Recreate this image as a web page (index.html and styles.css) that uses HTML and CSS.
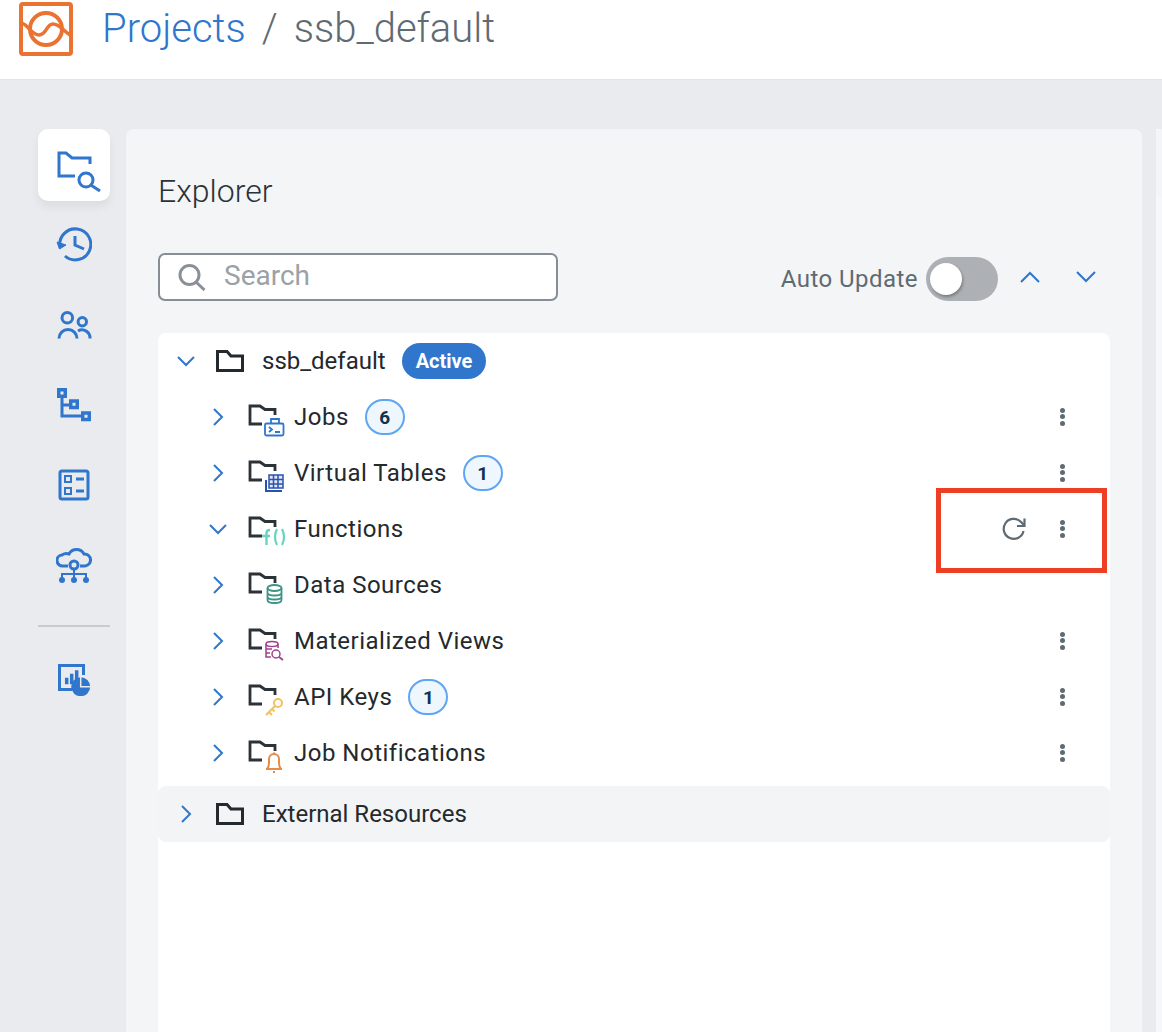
FILE: index.html
```html
<!DOCTYPE html>
<html lang="en">

<head>
    <meta charset="UTF-8">
    <title>ssb_default</title>
    <link rel="stylesheet" href="styles.css">
</head>

<body>
    <header class="topBar">
        <svg class="logo" width="54" height="54" viewBox="0 0 54 54" fill="none" stroke="#ea7331">
            <rect x="2" y="2" width="50" height="50" rx="2" stroke-width="4"/>
            <circle cx="27" cy="27" r="16" stroke-width="4"/>
            <path d="M3 21 C10 24 13 33 20 33 C28 33 27 22 34 22 C41 22 44 29 51 33" stroke-width="3.500"/>
        </svg>
        <nav class="crumbs">
            <a class="crumbLink">Projects</a>
            <span class="crumbSep">/</span>
            <span class="crumbCurrent">ssb_default</span>
        </nav>
    </header>

    <div class="workspace">
        <aside class="sideNav">
            <div class="sideItem selected">
                <svg width="56" height="56" viewBox="0 0 56 56" fill="none" stroke="#2f76cc" stroke-width="3">
                    <path d="M29 39 H13 V16 H20 L26 21 H44 V27"/>
                    <circle cx="40" cy="43" r="7"/>
                    <path d="M45.500 48.500 L54 54"/>
                </svg>
            </div>
            <div class="sideItem">
                <svg width="36" height="36" viewBox="0 0 36 36" fill="none" stroke="#2f76cc" stroke-width="3">
                    <path d="M4 20 A15.500 15.500 0 1 1 9 29"/>
                    <path d="M1 15 L3.500 22 L10 18 Z" fill="#2f76cc" stroke-width="1"/>
                    <path d="M19 9 V18 L28 22"/>
                </svg>
            </div>
            <div class="sideItem">
                <svg width="36" height="32" viewBox="0 0 36 32" fill="none" stroke="#2f76cc" stroke-width="3">
                    <circle cx="11.300" cy="8.700" r="5.300"/>
                    <circle cx="26.300" cy="12.700" r="4.200"/>
                    <path d="M3 29.500 A9 9 0 0 1 21 29.500"/>
                    <path d="M22 22 A8 8 0 0 1 34 29.500"/>
                </svg>
            </div>
            <div class="sideItem">
                <svg width="34" height="34" viewBox="0 0 34 34" fill="none" stroke="#2f76cc" stroke-width="3">
                    <rect x="1.750" y="1.750" width="6.500" height="6.500" stroke-width="3.500"/>
                    <rect x="13.750" y="13" width="6.500" height="6.500" stroke-width="3.500"/>
                    <rect x="25.750" y="25" width="6.500" height="6.500" stroke-width="3.500"/>
                    <path d="M5 10 V28 H24 M5 17 H12"/>
                </svg>
            </div>
            <div class="sideItem">
                <svg width="32" height="32" viewBox="0 0 32 32" fill="none" stroke="#2f76cc" stroke-width="3">
                    <rect x="2" y="2" width="28" height="28" rx="2"/>
                    <rect x="7" y="7" width="6" height="6" stroke-width="2"/>
                    <rect x="7" y="19" width="6" height="6" stroke-width="2"/>
                    <path d="M18 10 H26 M18 22 H26"/>
                </svg>
            </div>
            <div class="sideItem">
                <svg width="36" height="40" viewBox="0 0 36 40" fill="none" stroke="#2f76cc" stroke-width="3">
                    <path d="M12 21 H7 A5.500 5.500 0 0 1 6 10 A8 8 0 0 1 13 9 A8.500 8.500 0 0 1 28 9 A6 6 0 0 1 29 21 H24"/>
                    <circle cx="18" cy="20" r="4"/>
                    <path d="M18 24 V34 M6 34 V29 H30 V34" stroke-width="2"/>
                    <circle cx="6" cy="35" r="3" fill="#2f76cc" stroke="none"/>
                    <circle cx="18" cy="35" r="3" fill="#2f76cc" stroke="none"/>
                    <circle cx="30" cy="35" r="3" fill="#2f76cc" stroke="none"/>
                </svg>
            </div>
            <div class="sideDivider"></div>
            <div class="sideItem">
                <svg width="36" height="36" viewBox="0 0 36 36" fill="none" stroke="#2f76cc" stroke-width="3">
                    <path d="M16 29.500 H3.500 V5.500 H27.500 V15"/>
                    <path d="M10.700 24.300 V17.700 M15.700 24.300 V13.700 M20.700 22 V10.300" stroke-width="3.500"/>
                    <circle cx="24.700" cy="26.700" r="9.500" fill="#2f76cc" stroke="none"/>
                    <path d="M24.700 17 V26.700 H34.500" stroke="#e9ebee" stroke-width="1.500"/>
                </svg>
            </div>
        </aside>

        <main class="explorerPanel">
            <h1 class="panelTitle">Explorer</h1>

            <div class="toolRow">
                <label class="searchBox">
                    <svg width="28" height="28" viewBox="0 0 28 28" fill="none" stroke="#8a9097" stroke-width="3">
                        <circle cx="11.500" cy="12" r="9.500"/>
                        <path d="M18 19 L26.500 27"/>
                    </svg>
                    <span class="searchHint">Search</span>
                </label>
                <div class="toolRight">
                    <span class="autoLabel">Auto Update</span>
                    <span class="toggle"><span class="toggleKnob"></span></span>
                    <svg class="moveBtn" width="20" height="12" viewBox="0 0 20 12" fill="none" stroke="#2f76cc" stroke-width="2"><path d="M1 11 L10 2 L19 11"/></svg>
                    <svg class="moveBtn" width="20" height="12" viewBox="0 0 20 12" fill="none" stroke="#2f76cc" stroke-width="2"><path d="M1 1 L10 10 L19 1"/></svg>
                </div>
            </div>

            <section class="tree">
                <div class="rootRow">
                    <svg class="chev" width="18" height="18" viewBox="0 0 18 18" fill="none" stroke="#2f76cc" stroke-width="2"><path d="M1 5 L9 13 L17 5"/></svg>
                    <svg class="rootFolder" width="28" height="22" viewBox="0 0 28 22" fill="none" stroke="#24292d" stroke-width="3"><path d="M1.500 20.500 V1.500 H11 L15 6 H26.500 V20.500 Z"/></svg>
                    <span class="rootName">ssb_default</span>
                    <span class="activeBadge">Active</span>
                </div>

                <div class="treeRow">
                    <svg class="chev" width="18" height="18" viewBox="0 0 18 18" fill="none" stroke="#2f76cc" stroke-width="2"><path d="M5 1 L13 9 L5 17"/></svg>
                    <svg class="nodeIcon" width="38" height="36" viewBox="0 0 38 36" fill="none">
                        <path d="M14 21 H2 V3 H12 L17 6.500 H27 V12" stroke="#2b3238" stroke-width="2.800"/>
                        <g stroke="#2f76cc" stroke-width="1.800">
                            <rect x="17" y="20.500" width="18.500" height="12" rx="1.500" fill="#fff"/>
                            <path d="M23 20.500 V16 H31 V20.500 M21 24 L24 26.500 L21 29 M27 29 H32"/>
                        </g>
                    </svg>
                    <span class="nodeName">Jobs</span>
                    <span class="countBadge">6</span>
                    <span class="rowActions"><span class="kebab"><i></i><i></i><i></i></span></span>
                </div>

                <div class="treeRow">
                    <svg class="chev" width="18" height="18" viewBox="0 0 18 18" fill="none" stroke="#2f76cc" stroke-width="2"><path d="M5 1 L13 9 L5 17"/></svg>
                    <svg class="nodeIcon" width="38" height="36" viewBox="0 0 38 36" fill="none">
                        <path d="M14 21 H2 V3 H12 L17 6.500 H27 V12" stroke="#2b3238" stroke-width="2.800"/>
                        <g stroke="#2a52b0">
                            <path d="M18 21 V32 H34" stroke-width="2"/>
                            <rect x="21" y="16" width="14" height="13" fill="#dfe6f5" stroke-width="1.500"/>
                            <path d="M25.500 16 V29 M30 16 V29 M21 20.500 H35 M21 25 H35" stroke-width="1.500"/>
                        </g>
                    </svg>
                    <span class="nodeName">Virtual Tables</span>
                    <span class="countBadge">1</span>
                    <span class="rowActions"><span class="kebab"><i></i><i></i><i></i></span></span>
                </div>

                <div class="treeRow">
                    <svg class="chev" width="18" height="18" viewBox="0 0 18 18" fill="none" stroke="#2f76cc" stroke-width="2"><path d="M1 5 L9 13 L17 5"/></svg>
                    <svg class="nodeIcon" width="38" height="36" viewBox="0 0 38 36" fill="none">
                        <path d="M14 21 H2 V3 H12 L17 6.500 H27 V12" stroke="#2b3238" stroke-width="2.800"/>
                        <path d="M18.500 30 V18 Q18.500 15 22 15 M14 21 H22" stroke="#68d3bf" stroke-width="2.400"/>
                        <path d="M29 14 Q25 22 29 30 M34 14 Q38 22 34 30" stroke="#68d3bf" stroke-width="2.200"/>
                    </svg>
                    <span class="nodeName">Functions</span>
                    <span class="rowActions">
                        <svg width="24" height="24" viewBox="0 0 24 24" fill="none" stroke="#5f6a72" stroke-width="2.200"><path d="M21.500 14 A10 10 0 1 1 18.500 4.500 L22 8"/><path d="M22.500 1.500 V9 H15"/></svg>
                        <span class="kebab"><i></i><i></i><i></i></span>
                    </span>
                </div>

                <div class="treeRow">
                    <svg class="chev" width="18" height="18" viewBox="0 0 18 18" fill="none" stroke="#2f76cc" stroke-width="2"><path d="M5 1 L13 9 L5 17"/></svg>
                    <svg class="nodeIcon" width="38" height="36" viewBox="0 0 38 36" fill="none">
                        <path d="M14 21 H2 V3 H12 L17 6.500 H27 V12" stroke="#2b3238" stroke-width="2.800"/>
                        <g stroke="#3d9384" stroke-width="1.800">
                            <ellipse cx="26.500" cy="17" rx="7" ry="3"/>
                            <path d="M19.500 17 V29 Q19.500 32 26.500 32 Q33.500 32 33.500 29 V17 M19.500 21.500 Q19.500 24.500 26.500 24.500 Q33.500 24.500 33.500 21.500 M19.500 25.500 Q19.500 28.500 26.500 28.500 Q33.500 28.500 33.500 25.500"/>
                        </g>
                    </svg>
                    <span class="nodeName">Data Sources</span>
                </div>

                <div class="treeRow">
                    <svg class="chev" width="18" height="18" viewBox="0 0 18 18" fill="none" stroke="#2f76cc" stroke-width="2"><path d="M5 1 L13 9 L5 17"/></svg>
                    <svg class="nodeIcon" width="38" height="36" viewBox="0 0 38 36" fill="none">
                        <path d="M14 21 H2 V3 H12 L17 6.500 H27 V12" stroke="#2b3238" stroke-width="2.800"/>
                        <g stroke="#a2408f" stroke-width="1.500">
                            <ellipse cx="24" cy="17" rx="6" ry="2.500"/>
                            <path d="M18 17 V30 H23 M30 17 V21 M18 22 H24 M18 26 H22"/>
                            <circle cx="28" cy="27" r="4"/>
                            <path d="M31 30 L35 33" stroke-width="1.800"/>
                        </g>
                    </svg>
                    <span class="nodeName">Materialized Views</span>
                    <span class="rowActions"><span class="kebab"><i></i><i></i><i></i></span></span>
                </div>

                <div class="treeRow">
                    <svg class="chev" width="18" height="18" viewBox="0 0 18 18" fill="none" stroke="#2f76cc" stroke-width="2"><path d="M5 1 L13 9 L5 17"/></svg>
                    <svg class="nodeIcon" width="38" height="36" viewBox="0 0 38 36" fill="none">
                        <path d="M14 21 H2 V3 H12 L17 6.500 H27 V12" stroke="#2b3238" stroke-width="2.800"/>
                        <g stroke="#f0c35e" stroke-width="2">
                            <circle cx="30" cy="20" r="4"/>
                            <path d="M27 23 L18 32 M21 29 L24 32 M24 26 L26.500 28.500"/>
                        </g>
                    </svg>
                    <span class="nodeName">API Keys</span>
                    <span class="countBadge">1</span>
                    <span class="rowActions"><span class="kebab"><i></i><i></i><i></i></span></span>
                </div>

                <div class="treeRow">
                    <svg class="chev" width="18" height="18" viewBox="0 0 18 18" fill="none" stroke="#2f76cc" stroke-width="2"><path d="M5 1 L13 9 L5 17"/></svg>
                    <svg class="nodeIcon" width="38" height="36" viewBox="0 0 38 36" fill="none">
                        <path d="M14 21 H2 V3 H12 L17 6.500 H27 V12" stroke="#2b3238" stroke-width="2.800"/>
                        <g stroke="#e58c4b" stroke-width="2">
                            <path d="M19 30 Q21 28 21 24 V20 A5 5 0 0 1 31 20 V24 Q31 28 33 30"/>
                            <path d="M18 30 H34 M26 15 V13.500 M25 33 H27"/>
                        </g>
                    </svg>
                    <span class="nodeName">Job Notifications</span>
                    <span class="rowActions"><span class="kebab"><i></i><i></i><i></i></span></span>
                </div>

                <div class="rootRow external">
                    <svg class="chev" width="18" height="18" viewBox="0 0 18 18" fill="none" stroke="#2f76cc" stroke-width="2"><path d="M5 1 L13 9 L5 17"/></svg>
                    <svg class="rootFolder" width="28" height="22" viewBox="0 0 28 22" fill="none" stroke="#24292d" stroke-width="3"><path d="M1.500 20.500 V1.500 H11 L15 6 H26.500 V20.500 Z"/></svg>
                    <span class="rootName">External Resources</span>
                </div>
            </section>
        </main>

        <div class="nextPanel">
            <div class="nextTab"></div>
        </div>
    </div>

    <div class="callout"></div>
</body>

</html>
```

FILE: styles.css
```css
html,
body {
    height: 100%;
}

body {
    margin: 0;
    height: 1032px;
    overflow: hidden;
    display: flex;
    flex-direction: column;
    background-color: #e9ebee;
    font-family: Roboto, "Liberation Sans", sans-serif;
    color: #24292d;
}

.topBar {
    height: 80px;
    flex-shrink: 0;
    box-sizing: border-box;
    background-color: #fff;
    border-bottom: 1px solid #e2e4e7;
    display: flex;
    align-items: center;
    padding: 0 0 0 19px;
}

.logo {
    margin-top: -21px;
}

.crumbs {
    margin-left: 29px;
    margin-top: -22px;
    font-size: 40px;
    font-weight: 300;
    display: flex;
    gap: 16px;
    color: #5f6a72;
}

.crumbLink {
    color: #2f76cc;
}

.workspace {
    flex: 1;
    display: flex;
    padding: 49px 0 0 38px;
    min-height: 0;
}

.sideNav {
    width: 72px;
    flex-shrink: 0;
    display: flex;
    flex-direction: column;
    align-items: center;
}

.sideItem {
    width: 72px;
    height: 72px;
    margin-bottom: 8px;
    display: flex;
    align-items: center;
    justify-content: center;
}

.sideItem.selected {
    background-color: #fff;
    border-radius: 10px;
    box-shadow: 0 6px 10px rgba(0, 0, 0, 0.06);
}

.sideDivider {
    width: 72px;
    height: 2px;
    background-color: #c9cbce;
    margin: 16px 0 15px;
}

.explorerPanel {
    width: 1016px;
    flex-shrink: 0;
    box-sizing: border-box;
    margin-left: 16px;
    background-color: #f3f5f7;
    border-radius: 8px 8px 0 0;
    padding: 0 32px;
    display: flex;
    flex-direction: column;
}

.panelTitle {
    margin: 44px 0 0;
    font-size: 32px;
    line-height: 36px;
    font-weight: 300;
    color: #2b3238;
}

.toolRow {
    margin-top: 44px;
    display: flex;
    align-items: center;
    justify-content: space-between;
    height: 48px;
}

.searchBox {
    width: 400px;
    height: 48px;
    box-sizing: border-box;
    border: 2px solid #868d94;
    border-radius: 7px;
    background-color: #fff;
    display: flex;
    align-items: center;
    padding-left: 18px;
    gap: 18px;
}

.searchHint {
    font-size: 28px;
    line-height: 32px;
    margin-top: -2px;
    color: #9ba1a6;
}

.toolRight {
    display: flex;
    align-items: center;
    padding-right: 14px;
    padding-top: 4px;
}

.autoLabel {
    font-size: 24px;
    color: #5f6a72;
    letter-spacing: 0.45px;
}

.toggle {
    width: 72px;
    height: 44px;
    margin-left: 8px;
    margin-right: 22px;
    border-radius: 22px;
    background-color: #adb1b5;
    display: flex;
    align-items: center;
    padding-left: 4px;
    box-sizing: border-box;
}

.toggleKnob {
    width: 32px;
    height: 32px;
    border-radius: 50%;
    background-color: #fff;
    box-shadow: 1px 2px 3px rgba(0, 0, 0, 0.3);
}

.moveBtn {
    margin-top: -4px;
}

.moveBtn + .moveBtn {
    margin-left: 36px;
}

.tree {
    margin-top: 32px;
    flex: 1;
    background-color: #fff;
    border-radius: 8px 8px 0 0;
}

.rootRow {
    height: 56px;
    display: flex;
    align-items: center;
    padding-left: 19px;
}

.rootRow.external {
    background-color: #f3f4f5;
    border-radius: 8px;
    margin-top: 5px;
}

.rootFolder {
    margin-left: 21px;
}

.rootName {
    margin-left: 18px;
    font-size: 24px;
}

.activeBadge {
    margin-left: 16px;
    height: 36px;
    line-height: 36px;
    padding: 0 14px;
    border-radius: 18px;
    background-color: #2f76cc;
    color: #fff;
    font-size: 20px;
    font-weight: 700;
}

.treeRow {
    height: 56px;
    display: flex;
    align-items: center;
    padding-left: 51px;
}

.nodeIcon {
    margin-left: 21px;
    margin-top: 8px;
    overflow: visible;
}

.nodeName {
    margin-left: 8px;
    font-size: 24px;
    letter-spacing: 0.5px;
}

.countBadge {
    margin-left: 16px;
    width: 36px;
    height: 32px;
    border: 2px solid #5ea6f2;
    border-radius: 18px;
    background-color: #eef6fe;
    color: #12304f;
    font-size: 19px;
    font-weight: 700;
    display: flex;
    align-items: center;
    justify-content: center;
}

.rowActions {
    margin-left: auto;
    padding-right: 44px;
    display: flex;
    align-items: center;
    gap: 34px;
}

.kebab {
    width: 6px;
    margin-top: -1px;
    display: flex;
    flex-direction: column;
    gap: 1.5px;
}

.kebab i {
    width: 5px;
    height: 5px;
    border-radius: 50%;
    background-color: #5f6a72;
}

.nextPanel {
    width: 20px;
    margin-left: 14px;
    background-color: #f6f7f8;
}

.nextTab {
    height: 68px;
    background-color: #f3f5f7;
    border-radius: 8px 0 0 8px;
}

.callout {
    position: absolute;
    left: 936px;
    top: 488px;
    width: 171px;
    height: 85px;
    box-sizing: border-box;
    border: 5px solid #ee3f24;
}
```
